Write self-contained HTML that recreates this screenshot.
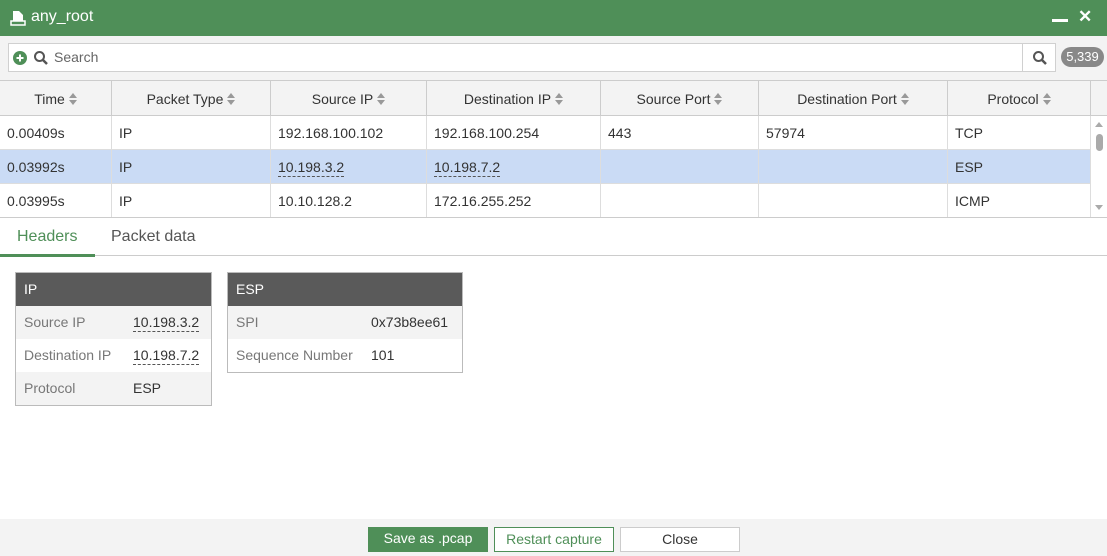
<!DOCTYPE html>
<html><head><style>
*{box-sizing:border-box;margin:0;padding:0}
body{width:1107px;height:556px;overflow:hidden;font-family:"Liberation Sans",sans-serif;font-size:14px;color:#333;background:#fff;position:relative}
.abs{position:absolute}
.title{left:0;top:0;width:1107px;height:36px;background:#4f8f58;color:#fff;font-size:16px}
.srow{left:0;top:36px;width:1107px;height:44px;background:#f3f3f3}
.sbox{left:8px;top:43px;width:1048px;height:29px;background:#fff;border:1px solid #d0d0d0}
.th{top:80px;height:36px;border-top:1px solid #ccc;border-bottom:1px solid #ccc;border-right:1px solid #ccc;background:#f3f3f3;text-align:center;line-height:36px;font-size:14px}
.td{height:34px;line-height:34px;padding-left:7px;border-right:1px solid #ddd;border-bottom:1px solid #ddd;font-size:14px}
.ul{border-bottom:1px dashed #555;padding-bottom:1px}
.sort{display:inline-block;width:8px;height:12px;vertical-align:-1px;margin-left:4px;position:relative}
.sort:before{content:"";position:absolute;left:0;top:0;border-left:4px solid transparent;border-right:4px solid transparent;border-bottom:5px solid #999}
.sort:after{content:"";position:absolute;left:0;top:7px;border-left:4px solid transparent;border-right:4px solid transparent;border-top:5px solid #999}
.panel{border:1px solid #bbb;background:#fff}
.ph{height:33px;background:#5a5a5a;color:#fff;line-height:33px;padding-left:8px}
.pr{height:33px;line-height:33px;padding-left:8px;position:relative;color:#777}
.pr .v{position:absolute;top:0;color:#333}
.btn{top:527px;height:25px;line-height:23px;text-align:center;font-size:14px}
</style></head><body>
<div class="abs title">
 <svg class="abs" style="left:10px;top:10px" width="16" height="16" viewBox="0 0 16 16"><path d="M3 1h6l4 4v6H3z" fill="#fff"/><path d="M1 11h14v4H1z" fill="none" stroke="#fff" stroke-width="1.5"/></svg>
 <span class="abs" style="left:31px;top:8px">any_root</span>
 <div class="abs" style="left:1052px;top:19px;width:16px;height:3px;background:#fff"></div>
 <span class="abs" style="left:1078px;top:7px;font-weight:bold;font-size:17px">✕</span>
</div>
<div class="abs srow"></div>
<div class="abs sbox">
 <svg class="abs" style="left:4px;top:7px" width="14" height="14"><circle cx="7" cy="7" r="7" fill="#4f8f58"/><path d="M7 3.5v7M3.5 7h7" stroke="#fff" stroke-width="2"/></svg>
 <svg class="abs" style="left:24px;top:6px" width="16" height="16"><circle cx="6.5" cy="6.5" r="4.5" fill="none" stroke="#555" stroke-width="2"/><path d="M10 10l4 4" stroke="#555" stroke-width="2.5"/></svg>
 <span class="abs" style="left:45px;top:5px;color:#666">Search</span>
 <div class="abs" style="left:1013px;top:-1px;width:35px;height:29px;border-left:1px solid #d0d0d0"></div>
 <svg class="abs" style="left:1023px;top:6px" width="16" height="16"><circle cx="6.5" cy="6.5" r="4.5" fill="none" stroke="#555" stroke-width="2"/><path d="M10 10l4 4" stroke="#555" stroke-width="2.5"/></svg>
</div>
<div class="abs" style="left:1061px;top:47px;width:43px;height:20px;border-radius:10px;background:#888;color:#fff;font-size:13px;line-height:20px;text-align:center">5,339</div>

<div class="abs th" style="left:0;width:112px">Time<span class="sort"></span></div>
<div class="abs th" style="left:112px;width:159px">Packet Type<span class="sort"></span></div>
<div class="abs th" style="left:271px;width:156px">Source IP<span class="sort"></span></div>
<div class="abs th" style="left:427px;width:174px">Destination IP<span class="sort"></span></div>
<div class="abs th" style="left:601px;width:158px">Source Port<span class="sort"></span></div>
<div class="abs th" style="left:759px;width:189px">Destination Port<span class="sort"></span></div>
<div class="abs th" style="left:948px;width:143px">Protocol<span class="sort"></span></div>
<div class="abs th" style="left:1091px;width:16px;border-right:none"></div>

<div class="abs" style="left:0;top:116px;width:1091px">
 <div style="display:flex"><div class="td" style="width:112px">0.00409s</div><div class="td" style="width:159px">IP</div><div class="td" style="width:156px">192.168.100.102</div><div class="td" style="width:174px">192.168.100.254</div><div class="td" style="width:158px">443</div><div class="td" style="width:189px">57974</div><div class="td" style="width:143px">TCP</div></div>
 <div style="display:flex;background:#cadbf5"><div class="td" style="width:112px">0.03992s</div><div class="td" style="width:159px">IP</div><div class="td" style="width:156px"><span class="ul">10.198.3.2</span></div><div class="td" style="width:174px"><span class="ul">10.198.7.2</span></div><div class="td" style="width:158px"></div><div class="td" style="width:189px"></div><div class="td" style="width:143px">ESP</div></div>
 <div style="display:flex"><div class="td" style="width:112px">0.03995s</div><div class="td" style="width:159px">IP</div><div class="td" style="width:156px">10.10.128.2</div><div class="td" style="width:174px">172.16.255.252</div><div class="td" style="width:158px"></div><div class="td" style="width:189px"></div><div class="td" style="width:143px">ICMP</div></div>
</div>
<div class="abs" style="left:1091px;top:116px;width:16px;height:102px;background:#fff"></div>
<div class="abs" style="left:1095px;top:122px;border-left:4px solid transparent;border-right:4px solid transparent;border-bottom:5px solid #aaa"></div>
<div class="abs" style="left:1096px;top:134px;width:7px;height:17px;border-radius:4px;background:#aaa"></div>
<div class="abs" style="left:1095px;top:205px;border-left:4px solid transparent;border-right:4px solid transparent;border-top:5px solid #aaa"></div>
<div class="abs" style="left:0;top:217px;width:1107px;height:1px;background:#ccc"></div>

<span class="abs" style="left:17px;top:228px;font-size:16px;color:#4f8f58">Headers</span>
<span class="abs" style="left:111px;top:228px;font-size:16px;color:#555">Packet data</span>
<div class="abs" style="left:0;top:255px;width:1107px;height:1px;background:#ccc"></div>
<div class="abs" style="left:0;top:254px;width:95px;height:3px;background:#4f8f58"></div>

<div class="abs panel" style="left:15px;top:272px;width:197px;height:134px">
 <div class="ph">IP</div>
 <div class="pr" style="background:#f3f3f3">Source IP<span class="v" style="left:117px"><span class="ul">10.198.3.2</span></span></div>
 <div class="pr">Destination IP<span class="v" style="left:117px"><span class="ul">10.198.7.2</span></span></div>
 <div class="pr" style="background:#f3f3f3">Protocol<span class="v" style="left:117px">ESP</span></div>
</div>
<div class="abs panel" style="left:227px;top:272px;width:236px;height:101px">
 <div class="ph">ESP</div>
 <div class="pr" style="background:#f3f3f3">SPI<span class="v" style="left:143px">0x73b8ee61</span></div>
 <div class="pr">Sequence Number<span class="v" style="left:143px">101</span></div>
</div>

<div class="abs" style="left:0;top:519px;width:1107px;height:37px;background:#f3f3f3"></div>
<div class="abs btn" style="left:368px;width:120px;background:#4f8f58;color:#fff">Save as .pcap</div>
<div class="abs btn" style="left:494px;width:120px;background:#fff;border:1px solid #4f8f58;color:#4f8f58">Restart capture</div>
<div class="abs btn" style="left:620px;width:120px;background:#fff;border:1px solid #ccc;color:#333">Close</div>
</body></html>
